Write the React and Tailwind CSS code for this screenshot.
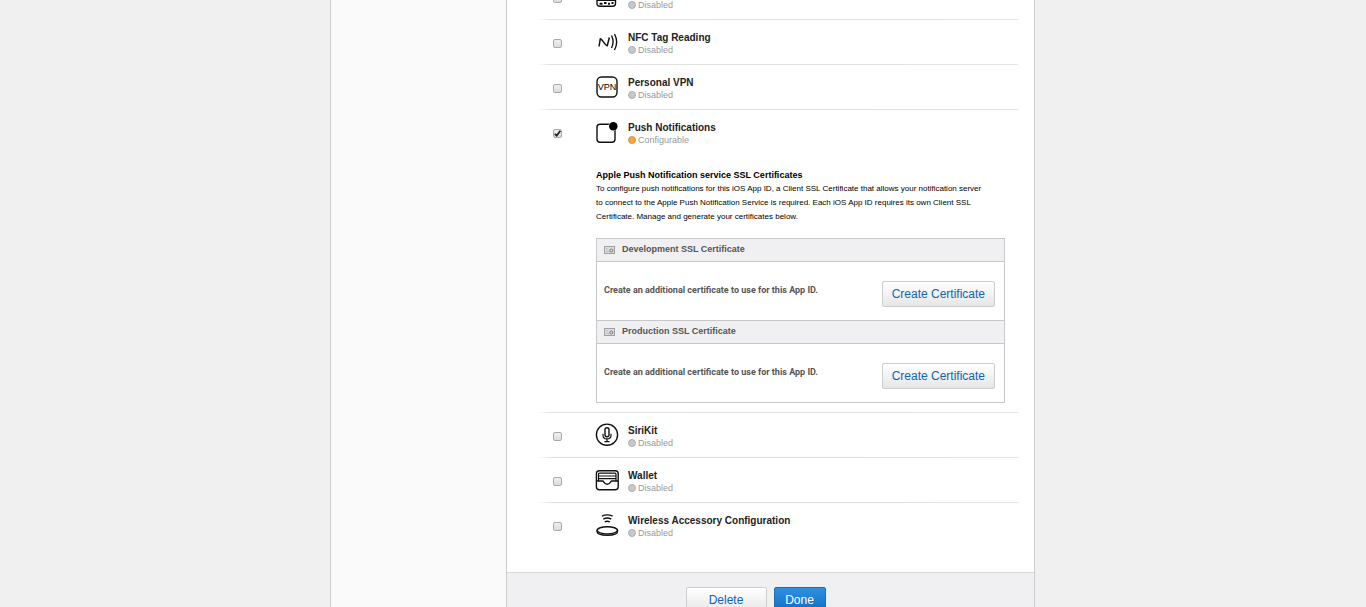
const CAPABILITIES = [
  { id: "network", name: "", icon: "network" },
  { id: "nfc", name: "NFC Tag Reading", icon: "nfc" },
  { id: "vpn", name: "Personal VPN", icon: "vpn" },
  { id: "push", name: "Push Notifications", icon: "push", enabled: true },
  { id: "siri", name: "SiriKit", icon: "siri" },
  { id: "wallet", name: "Wallet", icon: "wallet" },
  { id: "wac", name: "Wireless Accessory Configuration", icon: "wireless" },
];

const CERTS = ["Development SSL Certificate", "Production SSL Certificate"];

const ICONS = {
  network: (
    <>
      <path d="M2 2h18.500v16.500q0 2.700-2.700 2.700H4.700Q2 21.200 2 18.500z" />
      <path d="M2 15.500h18.500" strokeWidth="1" />
      <path d="M4.500 18.800h3M9 18h2.500M13 18.800h2M16.500 18h2" strokeWidth="1.900" />
    </>
  ),
  nfc: (
    <>
      <path d="M4 16.500L5.300 8.800C7 8.500 9.500 15 12.300 15.700L14.300 7.500" strokeWidth="1.500" />
      <path d="M16.500 5.500c2 4 2 8.500 0 12.500M19.500 4c2.700 5 2.700 11 0 16" strokeWidth="1.400" />
    </>
  ),
  vpn: (
    <>
      <rect x="2" y="2" width="20" height="20" rx="4.500" />
      <text x="12" y="15.300" textAnchor="middle" fontSize="9" fill="#000" stroke="none" className="font-['Liberation_Sans',sans-serif]">VPN</text>
    </>
  ),
  push: (
    <>
      <rect x="2" y="4.200" width="18" height="18" rx="3" />
      <circle cx="18.300" cy="6.200" r="4.800" fill="#fff" stroke="none" />
      <circle cx="18.300" cy="6.200" r="4.300" fill="#000" stroke="none" />
    </>
  ),
  siri: (
    <>
      <circle cx="12" cy="11.700" r="10.600" />
      <rect x="10" y="4.700" width="4" height="9" rx="2" />
      <path d="M8 10.700v1.500c0 5 8 5 8 0v-1.500M12 16V18.700M9.500 18.700h5" strokeWidth="1.200" />
    </>
  ),
  wallet: (
    <>
      <rect x="1.400" y="2.700" width="21.800" height="19" rx="3" />
      <path d="M3.500 13V6.200q0-1 1-1h15.500q1 0 1 1V13M3.500 8h17.500M3.500 10.700h17.500" strokeWidth="1.200" />
      <path d="M1.500 13h6.200c1.200 0 1.300 3.200 4.500 3.200s3.300-3.200 4.500-3.200h6.500" />
    </>
  ),
  wireless: (
    <>
      <ellipse cx="12.300" cy="17.300" rx="10.200" ry="3.600" />
      <path d="M2.100 17.300v1.500c0 4.600 20.400 4.600 20.400 0v-1.500M7 3.200c3.200-1.700 7.200-1.700 10.600 0M8.300 6.200c2.500-1.400 5.500-1.400 8 0M9.700 9c1.700-.9 3.500-.9 5.200 0" />
    </>
  ),
};

function CapabilityIcon({ name }) {
  return (
    <svg viewBox="0 0 24 24" className="w-6 h-6 shrink-0" fill="none" stroke="#111" strokeWidth="1.400" aria-hidden="true">
      {ICONS[name]}
    </svg>
  );
}

function Divider() {
  return <div className="h-px bg-linear-to-r from-white via-[#e0e0e0] from-0% via-3% to-[#e4e4e4]" />;
}

function CertIcon() {
  return (
    <svg viewBox="0 0 11 8" className="w-[11px] h-2 shrink-0" aria-hidden="true">
      <rect x=".5" y=".5" width="10" height="7" fill="#dcdcdc" stroke="#a0a0a0" />
      <path d="M2 3h2M2 5.500h3" stroke="#bbb" />
      <circle cx="7.300" cy="4.500" r="2" fill="#8a8a8a" />
      <circle cx="7.300" cy="4.500" r=".9" fill="#ddd" />
    </svg>
  );
}

function StatusDot({ on }) {
  return <span className={`w-2 h-2 rounded-full border ${on ? "border-[#d9963c] bg-[#f2a840]" : "border-[#b0b0b0] bg-[#c8c8c8]"}`} />;
}

function CapabilityRow({ cap }) {
  return (
    <div className="flex h-11 items-start pl-4">
      <div className="relative mt-[19px] w-[9px] h-[9px] shrink-0">
        <input
          id={cap.id}
          type="checkbox"
          defaultChecked={cap.enabled}
          className="peer block appearance-none w-[9px] h-[9px] rounded-xs border border-[#a9a9a9] bg-linear-to-b from-[#f0f0f0] to-[#dcdcdc]"
        />
        <svg viewBox="0 0 9 9" className="absolute inset-0 hidden peer-checked:block pointer-events-none" fill="none" stroke="#222" strokeWidth="1.800" aria-hidden="true">
          <path d="M1.800 4.800l1.900 1.900 3.600-5" />
        </svg>
      </div>
      <div className="ml-[33px] mt-[10px]">
        <CapabilityIcon name={cap.icon} />
      </div>
      <label htmlFor={cap.id} className="ml-[9px] mt-3">
        <span className="block min-h-3 text-[10px] leading-3 font-bold text-[#222]">{cap.name}</span>
        <span className="flex items-center gap-[2px] text-[9px] leading-3 text-[#999]">
          <StatusDot on={cap.enabled} />
          {cap.enabled ? "Configurable" : "Disabled"}
        </span>
      </label>
    </div>
  );
}

function Certificate({ title }) {
  return (
    <section>
      <h4 className="flex items-center gap-[7px] h-6 px-[7px] border-y border-[#c8c8cb] bg-[#f0f0f2] text-[9px] font-bold text-[#555]">
        <CertIcon />
        {title}
      </h4>
      <div className="flex items-start justify-between h-[58px] pl-[7px] pr-[9px]">
        <p className="mt-[22px] font-[Roboto,'Liberation_Sans',sans-serif] text-[9px] leading-3 font-bold text-[#555]">Create an additional certificate to use for this App ID.</p>
        <button className="mt-[19px] h-[26px] px-[9px] rounded-xs border border-[#cdcdcd] bg-linear-to-b from-white to-[#e6e6e6] text-xs text-[#0e66ad]">
          Create Certificate
        </button>
      </div>
    </section>
  );
}

function PushSettings() {
  return (
    <div className="ml-[59px] mr-[13px] pt-[14px] pb-[9px]">
      <h3 className="text-[9px] leading-[14px] font-bold text-black">Apple Push Notification service SSL Certificates</h3>
      <p className="text-[8px] leading-[14px] text-black">
        To configure push notifications for this iOS App ID, a Client SSL Certificate that allows your notification server
        <br />
        to connect to the Apple Push Notification Service is required. Each iOS App ID requires its own Client SSL
        <br />
        Certificate. Manage and generate your certificates below.
      </p>
      <div className="mt-[14px] border-x border-b border-[#c8c8cb]">
        {CERTS.map((title) => <Certificate key={title} title={title} />)}
      </div>
    </div>
  );
}

export default function App() {
  return (
    <div className="flex justify-center h-screen overflow-hidden pr-px bg-[#f0f0f0] font-['Liberation_Sans',Arial,sans-serif]">
      <div className="flex w-full max-w-[705px] border-x border-[#ccc] bg-[#fafafa]">
        <aside className="w-44 shrink-0 border-r border-[#ccc]" />
        <main className="flex-1 min-w-0 bg-white">
          <div className="-mt-[25px] pl-[30px] pr-4">
            {CAPABILITIES.map((cap, i) => (
              <div key={cap.id}>
                <CapabilityRow cap={cap} />
                {cap.enabled && <PushSettings />}
                {i < CAPABILITIES.length - 1 && <Divider />}
              </div>
            ))}
          </div>
          <footer className="flex justify-center gap-[7px] mt-[25px] pt-[14px] pr-[30px] h-20 border-t border-[#d8d8d8] bg-[#f0f0f2]">
            <button className="w-[81px] h-[26px] rounded-xs border border-[#cdcdcd] bg-linear-to-b from-white to-[#e6e6e6] text-xs text-[#0e66ad]">Delete</button>
            <button className="w-[52px] h-[26px] rounded-xs border border-[#1b6cb5] bg-linear-to-b from-[#2e92e0] to-[#0f6cc0] text-xs text-white">Done</button>
          </footer>
        </main>
      </div>
    </div>
  );
}
